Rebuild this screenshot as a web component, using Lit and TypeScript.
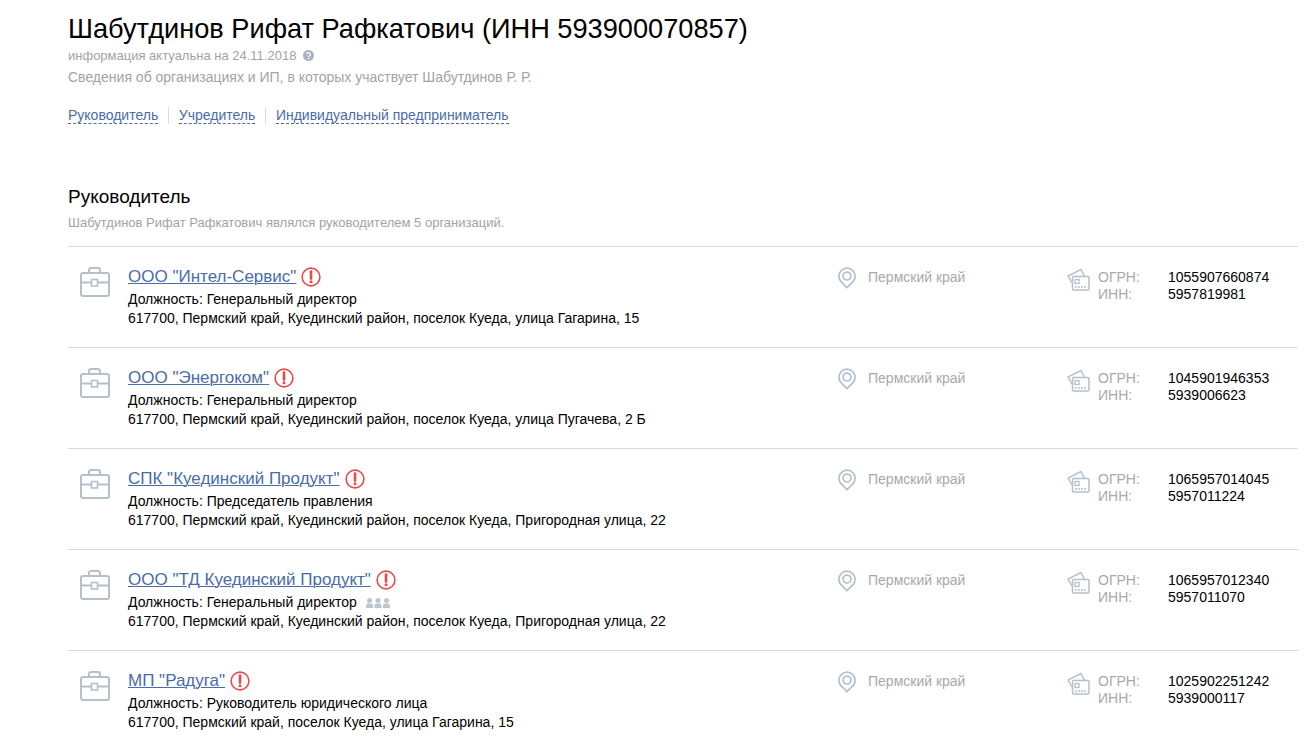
import { LitElement, html, css, svg } from "lit";
import { customElement } from "lit/decorators.js";

const rows = [
  { name: 'ООО "Интел-Сервис"', role: "Генеральный директор", addr: "617700, Пермский край, Куединский район, поселок Куеда, улица Гагарина, 15", ogrn: "1055907660874", inn: "5957819981" },
  { name: 'ООО "Энергоком"', role: "Генеральный директор", addr: "617700, Пермский край, Куединский район, поселок Куеда, улица Пугачева, 2 Б", ogrn: "1045901946353", inn: "5939006623" },
  { name: 'СПК "Куединский Продукт"', role: "Председатель правления", addr: "617700, Пермский край, Куединский район, поселок Куеда, Пригородная улица, 22", ogrn: "1065957014045", inn: "5957011224" },
  { name: 'ООО "ТД Куединский Продукт"', role: "Генеральный директор", people: true, addr: "617700, Пермский край, Куединский район, поселок Куеда, Пригородная улица, 22", ogrn: "1065957012340", inn: "5957011070" },
  { name: 'МП "Радуга"', role: "Руководитель юридического лица", addr: "617700, Пермский край, поселок Куеда, улица Гагарина, 15", ogrn: "1025902251242", inn: "5939000117" },
];

const briefcase = svg`<svg class="case" width="30" height="30" viewBox="0 0 30 30" fill="none" stroke="#b4c0cc" stroke-width="2"><rect x="1" y="6" width="28" height="23" rx="2"/><path d="M9 6V3a2 2 0 0 1 2-2h7a2 2 0 0 1 2 2v3M1 15.5h10.5M17.5 15.5H29"/><rect x="11.5" y="12.5" width="6" height="6.5" stroke-width="1.6"/></svg>`;
const pin = svg`<svg class="pin" width="18" height="22" viewBox="0 0 20 24.4" fill="none" stroke="#b4c0cc" stroke-width="1.9"><path d="M10 23 3.6 16.6A9 9 0 1 1 16.4 16.6Z" stroke-linejoin="round"/><circle cx="10" cy="10" r="4.4"/></svg>`;
const card = svg`<svg class="card" width="23" height="23" viewBox="0 0 23 23" fill="none" stroke="#b4c0cc" stroke-width="1.5"><path d="M5 15 1 8 14 1.5l3.5 7"/><rect x="5.5" y="8.5" width="16.5" height="13.5" rx="1.2" fill="#fff"/><rect x="8" y="11.5" width="4" height="4" stroke-width="1.3"/><path d="M8 19h12" stroke-width="1.5" stroke-dasharray="2 1"/></svg>`;
const warn = svg`<svg class="warn" width="20" height="20" viewBox="0 0 20 20"><circle cx="10" cy="10" r="8.9" fill="#fff" stroke="#e8494b" stroke-width="1.6"/><path d="M10 4.6v7" stroke="#e8494b" stroke-width="2.6" stroke-linecap="round"/><circle cx="10" cy="14.8" r="1.5" fill="#e8494b"/></svg>`;
const person = (x: number) => svg`<circle cx="${x + 3.5}" cy="2.6" r="2.5"/><path d="M${x} 10V7.6Q${x} 5.6 ${x + 2} 5.6H${x + 5}Q${x + 7} 5.6 ${x + 7} 7.6V10Z"/>`;
const people = svg`<svg class="people" width="24" height="10" viewBox="0 0 24 10" fill="#bcc6d0">${person(0)}${person(8.5)}${person(17)}</svg>`;
const help = svg`<svg class="help" width="11" height="11" viewBox="0 0 11 11"><circle cx="5.5" cy="5.5" r="5.5" fill="#a9b4bf"/><path d="M3.7 4.3a1.8 1.7 0 1 1 2.8 1.4c-.7.4-1 .7-1 1.3" fill="none" stroke="#fff" stroke-width="1.2"/><circle cx="5.5" cy="8.6" r=".8" fill="#fff"/></svg>`;

@customElement("app-root")
export class AppRoot extends LitElement {
  static styles = css`
    :host { display: block; height: 743px; overflow: hidden; background: #fff; font-family: "Liberation Sans", Arial, sans-serif; color: #000; }
    .page { padding: 10px 15px 0 68px; }
    h1 { margin: 0; font-weight: 400; font-size: 27.2px; line-height: 38px; color: #000; }
    .actual { display: flex; align-items: center; gap: 7px; font-size: 13px; line-height: 17px; color: #a3a3a3; margin-top: -1px; }
    .lead { font-size: 14px; line-height: 18px; color: #a3a3a3; margin-top: 4px; }
    .tabs { display: flex; margin-top: 21px; height: 17px; }
    .tabs a { font-size: 14px; line-height: 16px; height: 16px; color: #4a6ca8; text-decoration: none; border-bottom: 1px dashed #4a6ca8; }
    .tabs .sep { width: 1px; background: #dcdcdc; margin: 0 10px 0 9.6px; height: 17px; }
    h2 { margin: 61px 0 0; font-weight: 400; font-size: 19px; line-height: 24px; color: #000; }
    .sub { font-size: 13px; line-height: 16px; color: #a3a3a3; margin-top: 6px; padding-bottom: 15px; border-bottom: 1px solid #d9d9d9; }
    .row { display: grid; grid-template-columns: 60px 710px 230px 1fr; height: 100px; border-bottom: 1px solid #d9d9d9; }
    .ico { padding: 20px 0 0 12px; }
    .case, .pin, .card { display: block; }
    .main { padding-top: 19px; font-size: 14px; line-height: 19px; }
    .title { display: flex; align-items: center; gap: 5px; height: 22px; margin-bottom: 2px; }
    .title a { font-size: 17px; line-height: 20px; color: #4a6ca8; text-decoration: underline; text-underline-offset: 1px; text-decoration-thickness: 1px; }
    .role { display: flex; align-items: center; gap: 9.5px; }
    .region { display: flex; gap: 12px; padding-top: 20px; color: #a9a9a9; font-size: 14px; line-height: 20px; font-weight: 400; }
    .ids { display: flex; padding-top: 22px; font-size: 14px; line-height: 17px; margin-left: -1px; }
    .ids .card { margin: -1px 8px 0 0; }
    .labels { width: 70px; color: #a9a9a9; }
  `;

  render() {
    return html`<div class="page">
      <h1>Шабутдинов Рифат Рафкатович (ИНН 593900070857)</h1>
      <div class="actual"><span>информация актуальна на 24.11.2018</span>${help}</div>
      <div class="lead">Сведения об организациях и ИП, в которых участвует Шабутдинов Р. Р.</div>
      <div class="tabs"><a>Руководитель</a><span class="sep"></span><a>Учредитель</a><span class="sep"></span><a>Индивидуальный предприниматель</a></div>
      <h2>Руководитель</h2>
      <div class="sub">Шабутдинов Рифат Рафкатович являлся руководителем 5 организаций.</div>
      ${rows.map((r) => html`<div class="row">
        <div class="ico">${briefcase}</div>
        <div class="main">
          <div class="title"><a>${r.name}</a>${warn}</div>
          <div class="role"><span>Должность: ${r.role}</span>${r.people ? people : ""}</div>
          <div>${r.addr}</div>
        </div>
        <div class="region">${pin}<span>Пермский край</span></div>
        <div class="ids">${card}<div class="labels">ОГРН:<br />ИНН:</div><div>${r.ogrn}<br />${r.inn}</div></div>
      </div>`)}
    </div>`;
  }
}
